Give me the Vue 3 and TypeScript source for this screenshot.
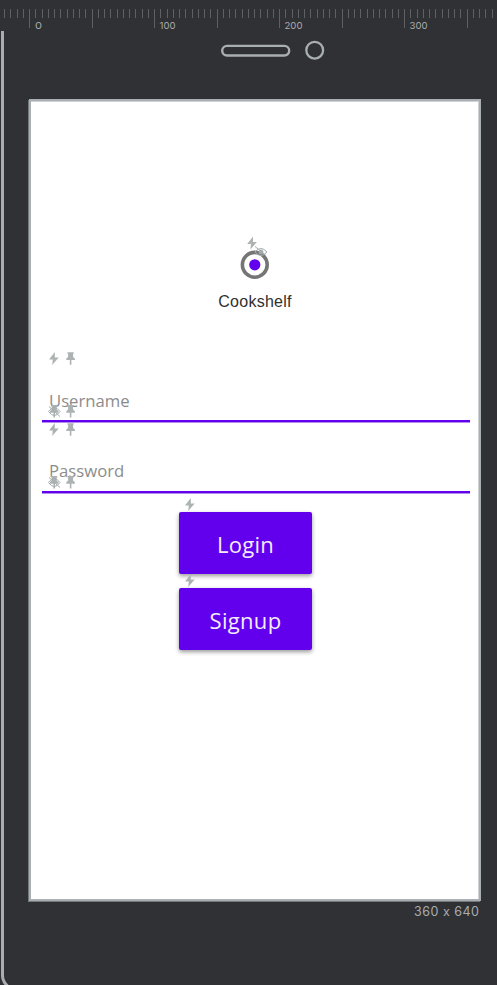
<script setup lang="ts">
interface Tick { x: number; major: boolean }
const ticks: Tick[] = Array.from({ length: 79 }, (_, n) => {
  const i = n - 4
  return { x: Math.round(29 + i * 6.25), major: i % 10 === 0 }
}).filter((t) => t.x < 497)
const labels: number[] = [0, 100, 200, 300]
const fields: string[] = ['Username', 'Password']
const actions: string[] = ['Login', 'Signup']
const bolt = 'M5.8 0L0 7.4h3.8L3.2 13L9.7 5.4H5.8z'
const pin = 'M1.3 0h6.2v1.4h-.6v3.2L8.7 6.2v1.5H5.2V12.5H3.6V7.7H.1V6.2L1.9 4.6V1.4h-.6z'
</script>

<template>
  <div class="editor">
    <svg class="ruler" width="497" height="31" aria-hidden="true">
      <rect v-for="t in ticks" :key="t.x" :x="t.x" y="9" width="1" :height="t.major ? 19 : 9" fill="#5e6063" />
      <text v-for="l in labels" :key="l" :x="(l ? 34.5 : 35) + l * 1.25" y="29" class="tick-label" :textLength="l === 0 ? 7 : l === 100 ? 16 : 18" lengthAdjust="spacingAndGlyphs">{{ l }}</text>
    </svg>
    <div class="device">
      <div class="sensors">
        <svg width="104" height="20" viewBox="0 0 104 20" fill="none" stroke="#a9afb1">
          <rect x="1.2" y="5.9" width="67" height="9.6" rx="4.8" stroke-width="2.4" />
          <circle cx="93.7" cy="10.2" r="8.4" stroke-width="2.3" />
        </svg>
      </div>
      <main class="screen">
        <header class="brand">
          <svg class="logo" width="40" height="46" viewBox="0 0 40 46">
            <circle cx="19.8" cy="30.8" r="12.4" fill="none" stroke="#757575" stroke-width="3.6" />
            <circle cx="19.8" cy="30.8" r="5.6" fill="#6200ee" />
            <path :d="bolt" transform="translate(12.2 2.5)" fill="#adb3b3" />
            <g stroke="#a5acac" fill="none" stroke-width="1">
              <path d="M20 18q6-7 12 0q-6 7-12 0zM20 12.5l11 9" /><circle cx="26" cy="18" r="2" fill="#a5acac" />
            </g>
          </svg>
          <h1>Cookshelf</h1>
        </header>
        <label v-for="f in fields" :key="f" class="field">
          <svg class="hints" width="28" height="13" viewBox="0 0 28 13" fill="#adb3b3">
            <path :d="bolt" /><path :d="pin" transform="translate(17.2 0.3)" />
          </svg>
          <span class="placeholder">{{ f }}</span>
          <svg class="constraints" width="30" height="13" viewBox="0 0 30 13" fill="#adb3b3">
            <path :d="pin" transform="translate(1.8 0)" /><path :d="pin" transform="translate(18.2 0)" />
            <path d="M.5 6.5q5.8-8 11.5 0q-5.7 8-11.5 0zM1 1.5l11 10" fill="none" stroke="#a5acac" />
          </svg>
        </label>
        <div class="actions">
          <div v-for="a in actions" :key="a" class="action">
            <svg width="10" height="13" viewBox="0 0 10 13" fill="#adb3b3"><path :d="bolt" /></svg>
            <button type="button">{{ a }}</button>
          </div>
        </div>
      </main>
      <div class="dimensions"><span>360 x 640</span></div>
    </div>
  </div>
</template>

<style>
body { margin: 0; background: #303135; }
</style>

<style scoped>
.editor { width: 497px; height: 985px; overflow: hidden; background: #303135; }
.ruler { display: block; }
.tick-label { font: 9.5px Inter, sans-serif; fill: #a9acae; }
.device { box-sizing: border-box; width: 520px; height: 960px; margin-left: 1px; border: solid #a9adb0; border-width: 0 0 3px 3px; border-bottom-left-radius: 16px; }
.sensors { height: 68px; padding: 9px 0 0 217px; box-sizing: border-box; }
.screen { box-sizing: border-box; width: 452px; height: 802px; margin-left: 25px; border: 2px solid #a9afb3; background: #fff; box-shadow: -1px 1px #73787b, inset -1px 1px #d0d3d5; }
.brand { height: 250px; padding-top: 133px; box-sizing: border-box; display: flex; flex-direction: column; align-items: center; }
.logo { flex: none; }
h1 { margin: 12px 0 0; font: 16px/20px "Liberation Sans", Arial, sans-serif; color: #303030; letter-spacing: .25px; }
.field { position: relative; display: block; box-sizing: border-box; height: 71px; margin: 0 9px 0 11px; padding: 38px 0 0 7px; border-bottom: 2px solid #6200ee; box-shadow: 0 1px #b58bef; }
.field + .field .placeholder { margin-top: -1px; }
.placeholder { display: block; font: 16.7px/24px "Open Sans", sans-serif; color: #8c8c8c; }
.hints { position: absolute; left: 7px; top: 1px; }
.constraints { position: absolute; left: 6px; top: 54px; }
.actions { width: 133px; margin: 5px 0 0 148px; }
.action { height: 76px; }
.action svg { display: block; margin-left: 6px; }
button { display: block; width: 133px; height: 62px; margin: 1px 0 0; padding: 1px 0 0; border: 0; border-radius: 2px; background: #6200ee; box-shadow: 0 2px 4px #0006; color: #f4ecfe; font: 22px/30px "Open Sans", sans-serif; letter-spacing: .3px; }
.dimensions { display: flex; justify-content: flex-end; width: 475.5px; padding-top: 2px; font: 12.5px/18px Inter, sans-serif; font-feature-settings: "calt" 0; letter-spacing: .5px; color: #a9acae; }
</style>
